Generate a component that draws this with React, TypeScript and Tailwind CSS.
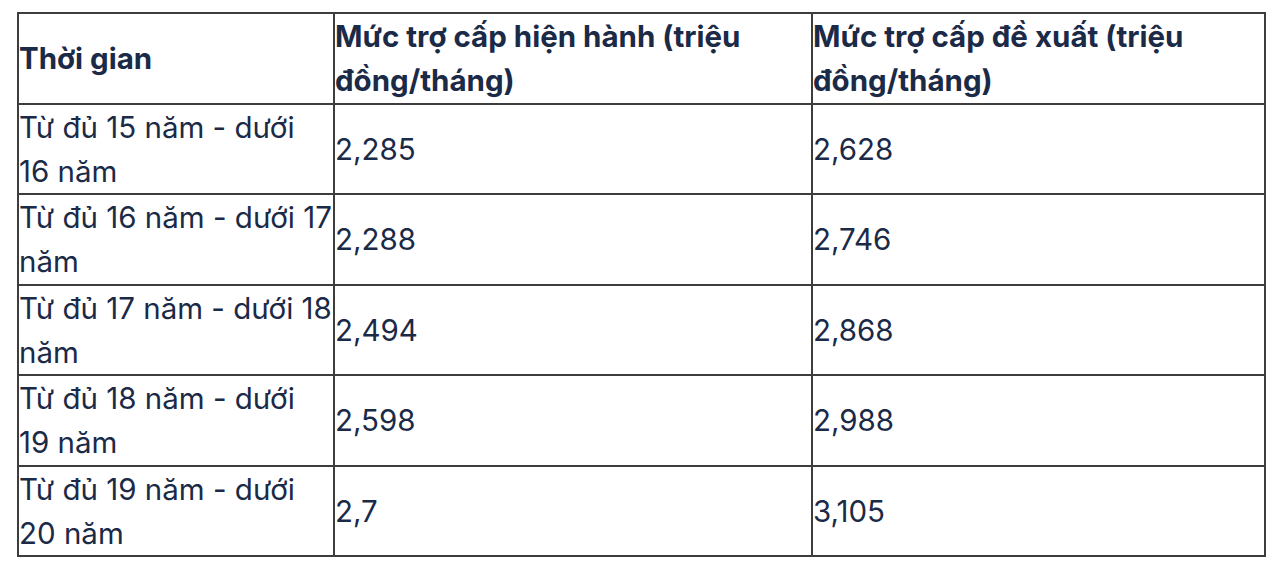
import React from "react";

const rows: [string, string, string][] = [
  ["Từ đủ 15 năm - dưới 16 năm", "2,285", "2,628"],
  ["Từ đủ 16 năm - dưới 17 năm", "2,288", "2,746"],
  ["Từ đủ 17 năm - dưới 18 năm", "2,494", "2,868"],
  ["Từ đủ 18 năm - dưới 19 năm", "2,598", "2,988"],
  ["Từ đủ 19 năm - dưới 20 năm", "2,7", "3,105"],
];

export default function App() {
  return (
    <div className="w-[1280px] h-[567px] bg-white pt-[12px] pl-[17px] font-['Inter','Noto_Sans',sans-serif] text-[#1b2a47]">
      <table className="border-collapse table-fixed w-[1247px] text-[29.5px] leading-[44.25px]">
        <colgroup>
          <col className="w-[316px]" />
          <col className="w-[478px]" />
          <col className="w-[453px]" />
        </colgroup>
        <thead>
          <tr>
            <th className="border-2 border-[#3d3d3d] text-left align-middle font-bold p-0">Thời gian</th>
            <th className="border-2 border-[#3d3d3d] text-left align-middle font-bold p-0">Mức trợ cấp hiện hành (triệu đồng/tháng)</th>
            <th className="border-2 border-[#3d3d3d] text-left align-middle font-bold p-0">Mức trợ cấp đề xuất (triệu đồng/tháng)</th>
          </tr>
        </thead>
        <tbody>
          {rows.map((r) => (
            <tr key={r[0]}>
              <td className="border-2 border-[#3d3d3d] align-middle p-0">{r[0]}</td>
              <td className="border-2 border-[#3d3d3d] align-middle p-0">{r[1]}</td>
              <td className="border-2 border-[#3d3d3d] align-middle p-0">{r[2]}</td>
            </tr>
          ))}
        </tbody>
      </table>
    </div>
  );
}
